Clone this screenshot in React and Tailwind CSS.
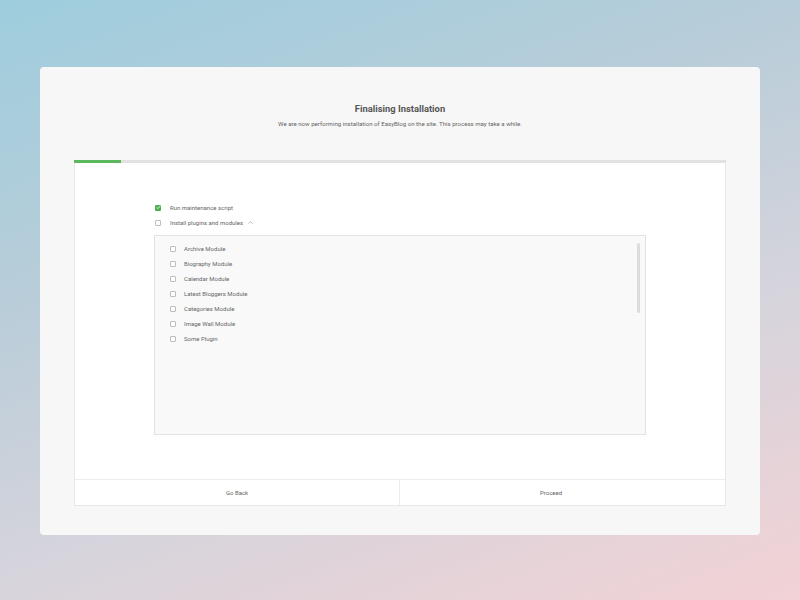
import { ChevronUp, Check } from 'lucide-react'

const MODULES = [
  'Archive Module',
  'Biography Module',
  'Calendar Module',
  'Latest Bloggers Module',
  'Categories Module',
  'Image Wall Module',
  'Some Plugin',
]

function Box({ checked }) {
  return checked ? (
    <span className="flex h-[6px] w-[6px] items-center justify-center rounded-[1px] bg-[#4cae4c]">
      <Check className="h-[5px] w-[5px] text-white" strokeWidth={4} />
    </span>
  ) : (
    <span className="h-[6px] w-[6px] rounded-[1px] border border-[#bdbdbd] bg-white" />
  )
}

export default function App() {
  return (
    <div
      className="flex h-[600px] w-[800px] items-start justify-center pt-[67px] text-[#555]"
      style={{
        fontFamily: 'Roboto, "Liberation Sans", sans-serif',
        background: 'linear-gradient(160deg, #9ecddd 0%, #b9cdd9 35%, #d6d4dc 65%, #f2d2d5 100%)',
      }}
    >
      <div className="flex h-[468px] w-[720px] flex-col rounded-[4px] bg-[#f7f7f7] px-[34px] pb-[29px]">
        <div className="flex flex-col items-center pt-[36px]">
          <div className="text-[9.4px] font-bold leading-[12px] text-[#555]">Finalising Installation</div>
          <div className="mt-[4px] text-[6.1px] leading-[9px] text-[#666]">
            We are now performing installation of EasyBlog on the site. This process may take a while.
          </div>
        </div>

        <div className="mt-[32px] h-[3px] w-full bg-[#e2e2e2]">
          <div className="h-full w-[47px] bg-[#5cb85c]" />
        </div>

        <div className="flex flex-1 flex-col border border-t-0 border-[#e8e8e8] bg-white">
          <div className="flex flex-1 flex-col px-[79px] pt-[40px]">
            <div className="flex h-[9px] items-center gap-[9px] pl-[1px] text-[6px] text-[#666]">
              <Box checked />
              <span>Run maintenance script</span>
            </div>
            <div className="mt-[6px] flex h-[9px] items-center gap-[9px] pl-[1px] text-[6px] text-[#666]">
              <Box />
              <span>Install plugins and modules</span>
              <ChevronUp className="-ml-[5px] h-[7px] w-[7px] text-[#888]" strokeWidth={2} />
            </div>

            <div className="relative mt-[8px] h-[200px] w-[492px] border border-[#e2e2e2] bg-[#f9f9f9] pl-[15px] pt-[5px]">
              <div className="flex flex-col">
                {MODULES.map((m) => (
                  <div key={m} className="flex h-[15px] items-center gap-[8px] text-[6px] text-[#666]">
                    <Box />
                    <span>{m}</span>
                  </div>
                ))}
              </div>
              <div className="absolute right-[5px] top-[7px] h-[70px] w-[3px] rounded-full bg-[#dcdcdc]" />
            </div>
          </div>

          <div className="flex h-[26px] border-t border-[#ececec] text-[6px] text-[#666]">
            <button className="flex w-[325px] items-center justify-center border-r border-[#ececec]">Go Back</button>
            <button className="flex flex-1 items-center justify-center pr-[23px]">Proceed</button>
          </div>
        </div>
      </div>
    </div>
  )
}
